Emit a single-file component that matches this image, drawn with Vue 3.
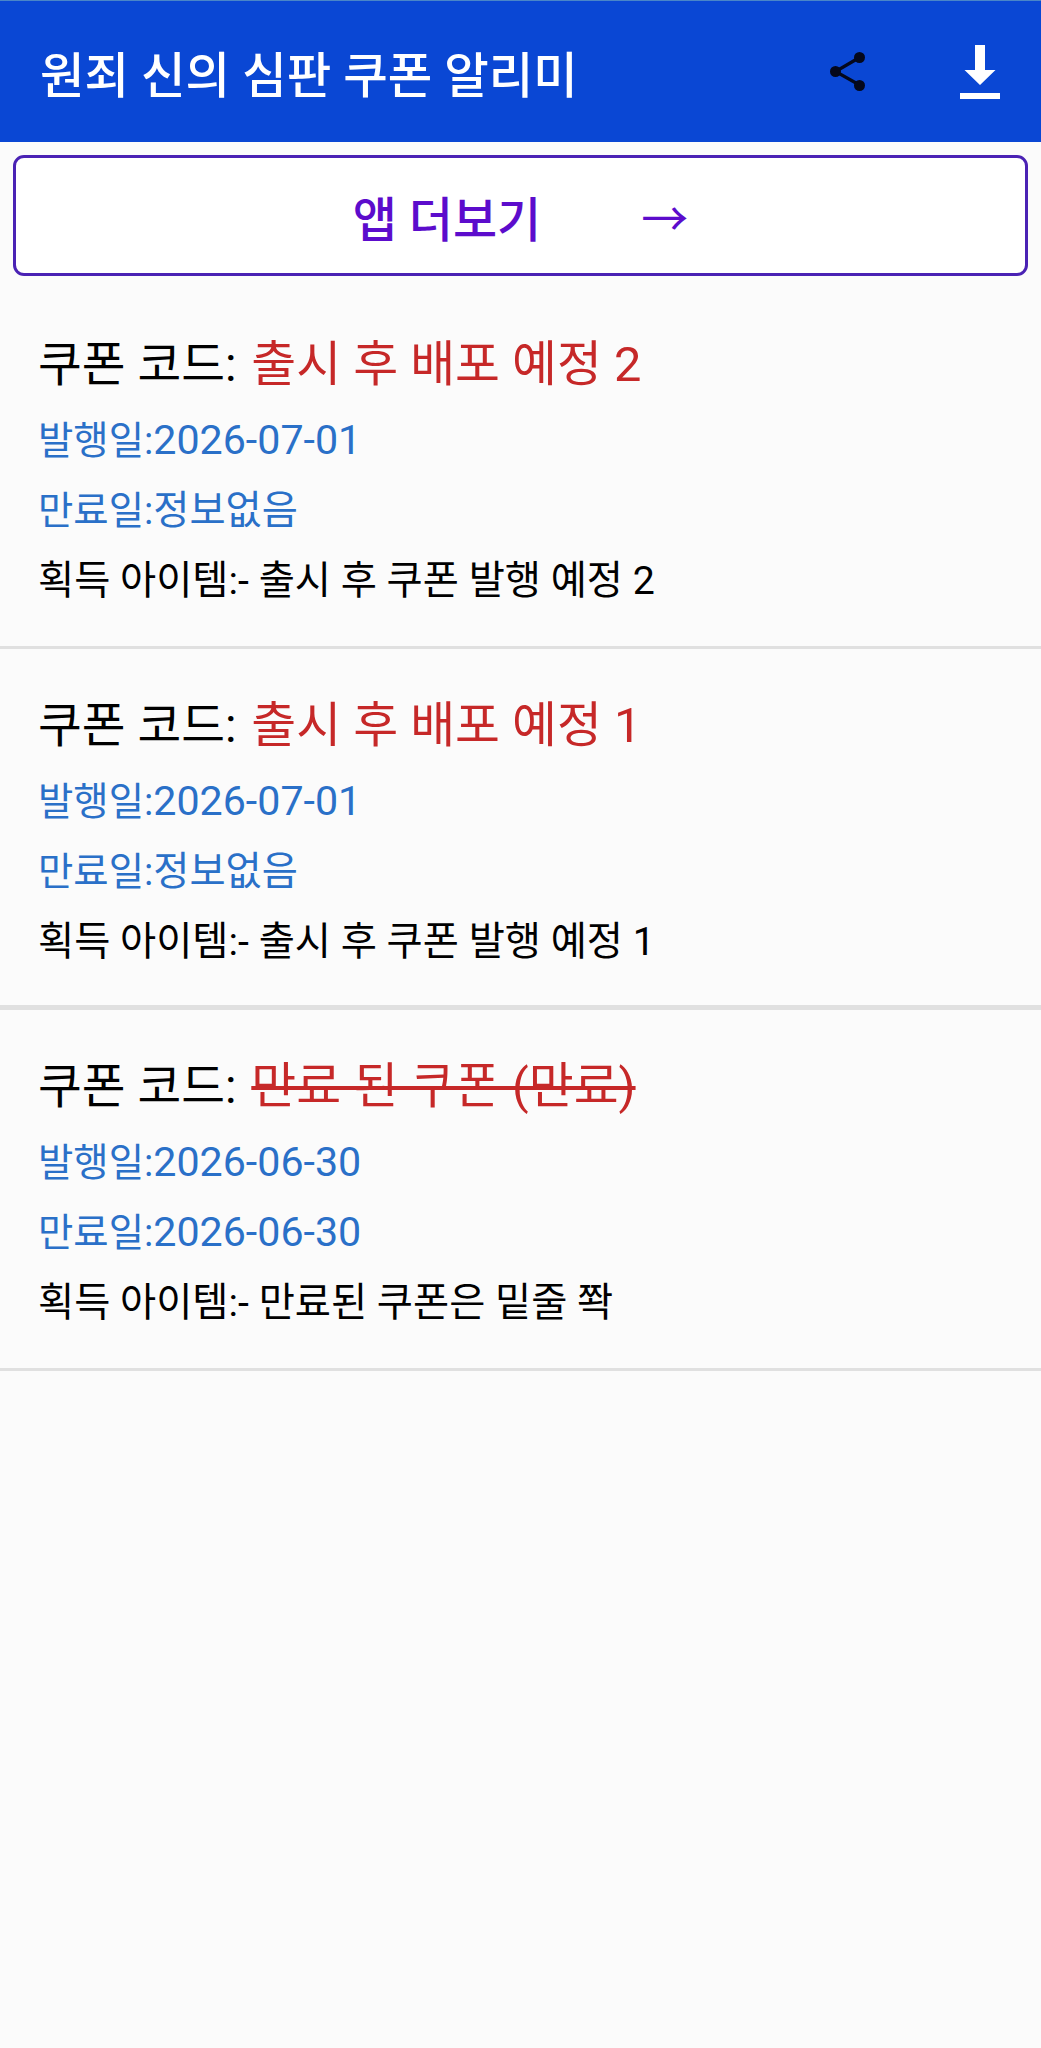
<script setup>
const coupons = [
  { code: '출시 후 배포 예정 2', issued: '2026-07-01', expires: '정보없음', item: '- 출시 후 쿠폰 발행 예정 2', expired: false, thick: false },
  { code: '출시 후 배포 예정 1', issued: '2026-07-01', expires: '정보없음', item: '- 출시 후 쿠폰 발행 예정 1', expired: false, thick: true },
  { code: '만료 된 쿠폰 (만료)', issued: '2026-06-30', expires: '2026-06-30', item: '- 만료된 쿠폰은 밑줄 쫙', expired: true, thick: false },
]
const valueClass = (v) => (/\d/.test(v) ? 'num' : 'ko')
</script>

<template>
  <div class="page">
    <header class="bar">
      <h1 class="bar-title">원죄 신의 심판 쿠폰 알리미</h1>
      <div class="bar-actions">
        <svg class="share" viewBox="0 0 35 39" width="35" height="39" aria-hidden="true">
          <path d="M29.5 5.5 L5.5 19.5 L29.5 33" fill="none" stroke="#04081c" stroke-width="3.2" />
          <circle cx="29.5" cy="5.5" r="5.5" fill="#04081c" />
          <circle cx="5.5" cy="19.5" r="5.5" fill="#04081c" />
          <circle cx="29.5" cy="33.5" r="5.5" fill="#04081c" />
        </svg>
        <svg class="download" viewBox="0 0 40 54" width="40" height="54" aria-hidden="true">
          <path d="M15 0 H25 V25 H35.5 L20 40 L4.5 25 H15 Z" fill="#fff" />
          <rect x="0" y="48" width="40" height="6" fill="#fff" />
        </svg>
      </div>
    </header>

    <button class="more" type="button">
      <span class="more-label">앱 더보기</span>
      <span class="more-arrow">→</span>
    </button>

    <ul class="list">
      <li v-for="c in coupons" :key="c.code" class="row" :class="{ thick: c.thick }">
        <p class="code">쿠폰 코드: <span class="code-value" :class="{ gone: c.expired }">{{ c.code }}</span></p>
        <p class="date"><span class="label">발행일:</span><span :class="valueClass(c.issued)">{{ c.issued }}</span></p>
        <p class="date"><span class="label">만료일:</span><span :class="valueClass(c.expires)">{{ c.expires }}</span></p>
        <p class="item">획득 아이템:{{ c.item }}</p>
      </li>
    </ul>
  </div>
</template>

<style>
html, body { margin: 0; background: #fbfbfb; }
</style>

<style scoped>
.page {
  width: 1041px;
  height: 2048px;
  background: #fbfbfb;
  font-family: Roboto, "Noto Sans CJK KR", sans-serif;
  overflow: hidden;
}
.bar {
  height: 142px;
  box-sizing: border-box;
  background: #0a47d4;
  border-top: 1px solid #4a86c8;
  display: flex;
  align-items: center;
  justify-content: space-between;
  padding: 0 41px 0 40px;
}
.bar-title {
  margin: 0;
  font-size: 48.4px;
  font-weight: 500;
  color: #fff;
}
.bar-actions {
  display: flex;
  align-items: center;
  gap: 95px;
}
.more {
  display: flex;
  align-items: center;
  justify-content: center;
  width: 1015px;
  height: 121px;
  margin: 13px 13px 0;
  box-sizing: border-box;
  border: 3px solid #4a22b4;
  border-radius: 11px;
  background: #fff;
  font-family: inherit;
  color: #5c0ccc;
}
.more-label {
  font-size: 48px;
  font-weight: 500;
}
.more-arrow {
  margin-left: 100px;
  font-size: 47px;
}
.list {
  list-style: none;
  margin: 12px 0 0;
  padding: 0;
}
.row {
  height: 361px;
  box-sizing: border-box;
  border-bottom: 3px solid #e0e0e0;
  display: flex;
  flex-direction: column;
  justify-content: flex-end;
  padding: 0 38px 29px;
}
.row.thick { border-bottom-width: 5px; padding-bottom: 27px; }
.row p { margin: 0; }
.code { font-size: 47.6px; line-height: 82px; color: #000; }
.code-value { font-size: 48.8px; line-height: 1; margin-left: 3px; color: #c62828; }
.gone { text-decoration: line-through; }
.date { font-size: 40px; line-height: 70px; color: #2a70c8; }
.date span { line-height: 1; }
.label { font-size: 38.4px; }
.num { font-size: 41.2px; }
.ko { font-size: 39.3px; }
.item { font-size: 39.3px; line-height: 71px; color: #000; }
</style>
